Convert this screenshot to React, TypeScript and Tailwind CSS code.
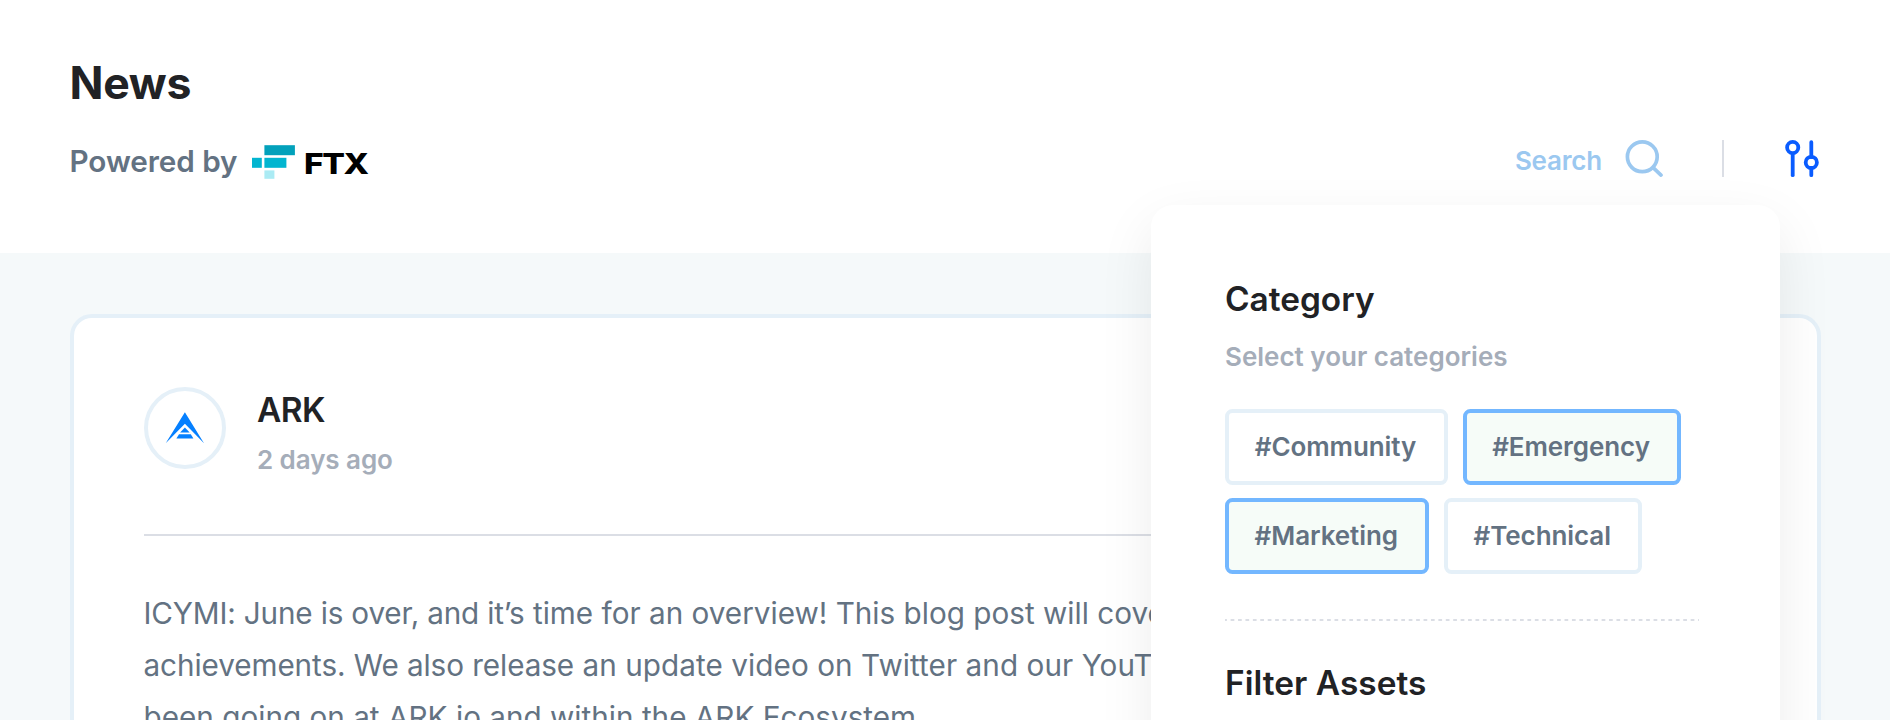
import clsx from "clsx";

const categories = [
  { label: "#Community", active: false, width: "w-[222.5px]" },
  { label: "#Emergency", active: true, width: "w-[218.5px]" },
  { label: "#Marketing", active: true, width: "w-[204px]" },
  { label: "#Technical", active: false, width: "w-[198px]" },
];

function FtxLogo() {
  return (
    <div className="ml-[14px] flex">
      <svg className="mt-[2px] h-[34px] w-[43px]" viewBox="0 0 43 34">
        <rect x="12.4" y="0.2" width="30.5" height="10" fill="#02a1bb" />
        <rect x="12.4" y="12.8" width="22" height="10" fill="#02b5d0" />
        <rect x="0" y="12.8" width="9.8" height="10" fill="#02b5d0" />
        <rect x="12.4" y="25.4" width="10" height="8.4" fill="#abebf4" />
      </svg>
      <span className="ml-[9px] mt-[3px] inline-block origin-left scale-x-[1.15] text-[29.2px] leading-[36px] font-extrabold tracking-[-1.2px] text-black">
        FTX
      </span>
    </div>
  );
}

function SearchIcon() {
  return (
    <svg className="h-[38px] w-[38px]" viewBox="0 0 38 38" fill="none" stroke="#9bc8f0" strokeWidth="3.7" strokeLinecap="round">
      <circle cx="17.3" cy="16.8" r="14.9" />
      <path d="M28.4 27.9L36 35.1" />
    </svg>
  );
}

function FilterIcon() {
  return (
    <svg className="h-[38px] w-[36px]" viewBox="0 0 36 38" fill="none" stroke="#0a5cff" strokeWidth="3.8" strokeLinecap="round">
      <circle cx="8.7" cy="7.5" r="5.6" />
      <path d="M8.7 14V35.2" />
      <circle cx="27.3" cy="22.4" r="5.6" />
      <path d="M27.3 2.2V17M27.3 29V35.2" />
    </svg>
  );
}

function ArkLogo() {
  return (
    <svg className="h-[32px] w-[39px]" viewBox="0 0 39 32" fill="#0580ff">
      <path d="M19.9 0.3L39 31.3L19.9 11.8L0.7 31.3Z" />
      <path d="M19.9 15.5L24.7 20.4H15.1Z" />
      <path d="M14 22.3H25.8L28.4 26.5H11.4Z" />
    </svg>
  );
}

function FilterPanel() {
  return (
    <aside className="absolute left-[1151px] top-[204.5px] h-[700px] w-[629px] rounded-[22px] bg-white px-[74px] pt-[74px] shadow-[0_20px_56px_rgba(0,0,0,0.08)]">
      <h2 className="text-[33.4px] leading-[40px] font-semibold text-[#212225]">Category</h2>
      <p className="mt-[22px] text-[26px] leading-[32px] font-semibold text-[#a5adb9]">Select your categories</p>
      <div className="mt-[36px] flex flex-wrap gap-x-[15px] gap-y-[13px]">
        {categories.map((c) => (
          <button
            key={c.label}
            className={clsx(
              "h-[76px] rounded-[7.4px] border-[4px] pr-[1.5px] text-[26px] leading-[32px] font-semibold tracking-[-0.08px] text-[#637282]",
              c.width,
              c.active ? "border-[#73b7ff] bg-[#f6fcf8]" : "border-[#e5f0f8] bg-white",
            )}
          >
            {c.label}
          </button>
        ))}
      </div>
      <svg className="mt-[45px] block h-[2px] w-[474px]" viewBox="0 0 474 2">
        <path d="M0 1H474" stroke="#dbdee5" strokeWidth="2" strokeDasharray="3.71 3.71" strokeDashoffset="1.8" />
      </svg>
      <h2 className="mt-[42.5px] text-[33.4px] leading-[40px] font-semibold tracking-[0.05px] text-[#212225]">Filter Assets</h2>
    </aside>
  );
}

export default function App() {
  return (
    <div className="relative h-[720px] w-[1890px] overflow-hidden bg-[#f5f9fa] font-['Inter',sans-serif]">
      <header className="flex h-[253px] justify-between bg-white pl-[69.5px] pr-[70px] pt-[56px]">
        <div>
          <h1 className="text-[44.6px] leading-[54px] font-bold tracking-[-0.3px] text-[#212225]">News</h1>
          <div className="mt-[33px] flex text-[29.7px] leading-[36px] font-semibold text-[#637282]">
            <span className="tracking-[-0.07px]">Powered by</span>
            <FtxLogo />
          </div>
        </div>
        <div className="mt-[83.5px] flex h-[38px]">
          <span className="mt-[5px] text-[26px] leading-[32px] font-semibold tracking-[-0.2px] text-[#9bc8f0]">Search</span>
          <div className="ml-[23px] flex">
            <SearchIcon />
            <div className="ml-[59px] mt-[0.5px] h-[37px] w-[2px] bg-[#dbdee5]" />
            <div className="ml-[60px]">
              <FilterIcon />
            </div>
          </div>
        </div>
      </header>

      <main className="px-[69.5px] pt-[61px]">
        <article className="h-[600px] rounded-[22px] border-[4px] border-[#e5f0f8] bg-white px-[70px] pt-[69px]">
          <div className="flex">
            <div className="flex h-[82px] w-[82px] items-center justify-center rounded-full border-[4px] border-[#e5f0f8]">
              <ArkLogo />
            </div>
            <div className="ml-[31.5px] mt-[2.8px]">
              <h2 className="text-[33.4px] leading-[40px] font-semibold tracking-[-0.6px] text-[#212225]">ARK</h2>
              <p className="mt-[14.7px] text-[26px] leading-[32px] font-semibold tracking-[-0.08px] text-[#a5adb9]">2 days ago</p>
            </div>
          </div>
          <div className="mt-[57.5px] h-[2px] bg-[#dbdee5]" />
          <p className="mt-[51px] whitespace-nowrap text-[29.7px] leading-[52px] text-[#637282]">
            <span className="tracking-[-0.17px]">ICYMI: June is over, and it’s</span> time for an overview! This blog post will cover our
            <br />
            <span className="tracking-[-0.08px]">achievements. We also release</span>
            <span className="tracking-[0.06px]"> an update video on Twitter and our YouTube</span>
            <br />
            been going on at ARK.io and within the ARK Ecosystem.
          </p>
        </article>
      </main>

      <FilterPanel />
    </div>
  );
}
